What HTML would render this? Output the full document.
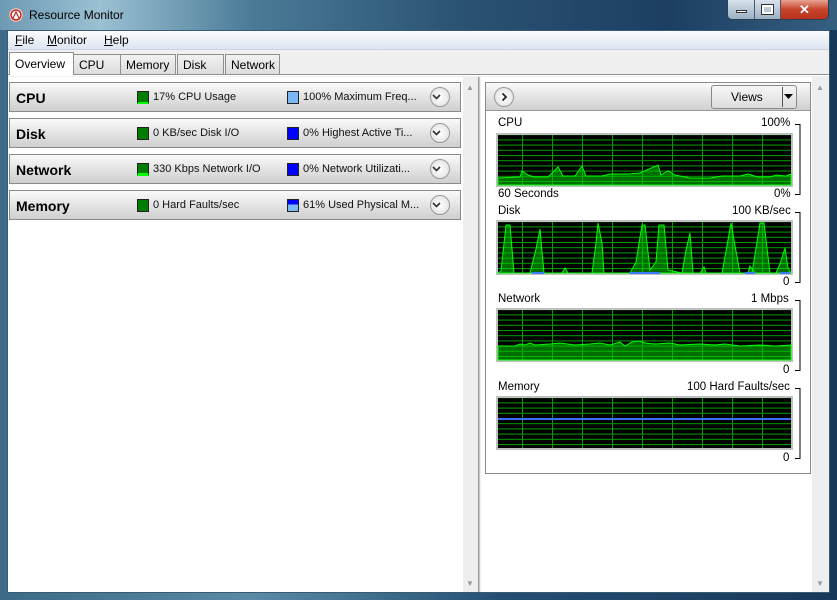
<!DOCTYPE html>
<html><head><meta charset="utf-8"><style>
*{margin:0;padding:0;box-sizing:border-box}
body{width:837px;height:600px;overflow:hidden;font-family:"Liberation Sans",sans-serif;font-size:12px;background:#fff;position:relative}
.abs{position:absolute}
#frame{left:0;top:0;width:837px;height:600px;background:linear-gradient(90deg,#3d6a86 0%,#5a8aa5 30%,#254f72 60%,#18385a 100%)}
#title{left:0;top:0;width:837px;height:30px;background:linear-gradient(90deg,#6d9ab4 0%,#9bc0d2 12%,#4b7b98 30%,#2a5273 55%,#1d3e63 80%,#355f80 100%)}
#client{left:7px;top:30px;width:823px;height:563px;background:#f0f0f0;border:1px solid #3a5a72}
#menu{left:8px;top:31px;width:821px;height:19px;background:linear-gradient(#fbfcfe,#dde5f1);border-bottom:1px solid #c8d2e0}
.mi{top:33px;font-size:12px;color:#000}
.tab{top:54px;height:20px;border:1px solid #8e8f8f;border-bottom:none;background:linear-gradient(#f2f2f2,#dcdcdc);font-size:12px;padding:3px 0 0 5px}
.panel{left:9px;width:452px;height:30px;border:1px solid #8a8a8a;background:linear-gradient(#fafafa 0%,#e6e6e6 45%,#cfcfcf 100%)}
.panel b{position:absolute;left:6px;top:7px;font-size:14px}
.panel .t{position:absolute;top:8px;font-size:11px;color:#111}
.sw{position:absolute;top:8px;width:12px;height:13px;border:1px solid #222}
.chev{position:absolute;left:420px;top:4px;width:20px;height:20px;border-radius:50%;border:1px solid #999;background:radial-gradient(#fff,#ddd)}
.glab{font-size:11.5px;color:#000}
</style></head><body>
<div id="frame" class="abs"></div>
<div id="title" class="abs"></div>
<svg class="abs" style="left:8px;top:7px" width="16" height="16"><circle cx="8" cy="8" r="7" fill="#fff" stroke="#999"/><circle cx="8" cy="8" r="5" fill="none" stroke="#c22" stroke-width="1.5"/><path d="M5 11L8 5L11 11" stroke="#c22" fill="none" stroke-width="1.2"/></svg>
<div class="abs" style="left:29px;top:8px;font-size:12px;color:#000">Resource Monitor</div>
<div class="abs" style="left:727px;top:0;width:102px;height:20px;border:1px solid #2b3f55;border-top:none;border-radius:0 0 5px 5px;overflow:hidden;display:flex">
<div style="width:27px;background:linear-gradient(#d8e2ec,#9bb0c4);border-right:1px solid #556"><div style="margin:10px 8px 0;width:11px;height:3px;background:#fff;border:1px solid #333"></div></div>
<div style="width:26px;background:linear-gradient(#d8e2ec,#9bb0c4);border-right:1px solid #556"><div style="margin:5px 7px 0;width:11px;height:9px;border:2px solid #fff;outline:1px solid #333"></div></div>
<div style="flex:1;background:linear-gradient(#e8a393,#c7432b 50%,#b8321c);color:#fff;font-weight:bold;text-align:center;font-size:13px;line-height:19px">✕</div></div>
<div id="client" class="abs"></div>
<div id="menu" class="abs"></div>
<div class="abs mi" style="left:15px"><u>F</u>ile</div>
<div class="abs mi" style="left:47px"><u>M</u>onitor</div>
<div class="abs mi" style="left:104px"><u>H</u>elp</div>
<div class="abs" style="left:8px;top:74px;width:821px;height:2px;background:#fff;border-top:1px solid #8e8f8f"></div>
<div class="abs tab" style="left:73px;width:48px">CPU</div>
<div class="abs tab" style="left:120px;width:56px">Memory</div>
<div class="abs tab" style="left:177px;width:47px">Disk</div>
<div class="abs tab" style="left:225px;width:55px">Network</div>
<div class="abs tab" style="left:9px;top:52px;height:23px;width:65px;background:#fff;padding-top:4px">Overview</div>
<div class="abs" style="left:8px;top:77px;width:470px;height:515px;background:#fff"></div>
<div class="abs" style="left:463px;top:77px;width:15px;height:515px;background:#eee"></div>
<div class="abs" style="left:466px;top:83px;color:#999;font-size:8px">▲</div>
<div class="abs" style="left:466px;top:579px;color:#999;font-size:8px">▼</div>
<div class="abs" style="left:478px;top:77px;width:2px;height:515px;background:#c8c8c8;border-left:1px solid #999"></div>

<div class="abs panel" style="top:82px"><b>CPU</b><div class="sw" style="left:127px;background:#0a0;background-image:radial-gradient(#000 0.6px,transparent 0.8px);background-size:2px 2px;border-bottom:2px solid #0f0"></div><div class="t" style="left:143px">17% CPU Usage</div><div class="sw" style="left:277px;background:#7bb8f4"></div><div class="t" style="left:293px">100% Maximum Freq...</div><div class="chev"></div></div>
<div class="abs panel" style="top:118px"><b>Disk</b><div class="sw" style="left:127px;background:#0a0;background-image:radial-gradient(#000 0.6px,transparent 0.8px);background-size:2px 2px"></div><div class="t" style="left:143px">0 KB/sec Disk I/O</div><div class="sw" style="left:277px;background:#00f"></div><div class="t" style="left:293px">0% Highest Active Ti...</div><div class="chev"></div></div>
<div class="abs panel" style="top:154px"><b>Network</b><div class="sw" style="left:127px;background:#0a0;background-image:radial-gradient(#000 0.6px,transparent 0.8px);background-size:2px 2px;border-bottom:3px solid #0f0"></div><div class="t" style="left:143px">330 Kbps Network I/O</div><div class="sw" style="left:277px;background:#00f"></div><div class="t" style="left:293px">0% Network Utilizati...</div><div class="chev"></div></div>
<div class="abs panel" style="top:190px"><b>Memory</b><div class="sw" style="left:127px;background:#0a0;background-image:radial-gradient(#000 0.6px,transparent 0.8px);background-size:2px 2px"></div><div class="t" style="left:143px">0 Hard Faults/sec</div><div class="sw" style="left:277px;background:linear-gradient(#00f 40%,#7bb8f4 40%)"></div><div class="t" style="left:293px">61% Used Physical M...</div><div class="chev"></div></div>
<svg class="abs" style="left:0;top:0" width="837" height="600">
<g fill="none" stroke="#333" stroke-width="1.6">
<path d="M433 95l3.5 3.5 3.5-3.5M433 131l3.5 3.5 3.5-3.5M433 167l3.5 3.5 3.5-3.5M433 203l3.5 3.5 3.5-3.5"/></g></svg>

<div class="abs" style="left:481px;top:77px;width:348px;height:515px;background:#fff"></div>
<div class="abs" style="left:812px;top:77px;width:17px;height:515px;background:#eee"></div>
<div class="abs" style="left:816px;top:83px;color:#999;font-size:8px">▲</div>
<div class="abs" style="left:816px;top:579px;color:#999;font-size:8px">▼</div>
<div class="abs" style="left:485px;top:82px;width:326px;height:392px;border:1px solid #8a8a8a;background:#fff"></div>
<div class="abs" style="left:486px;top:83px;width:324px;height:28px;background:linear-gradient(#fafafa,#e4e4e4 50%,#d0d0d0);border-bottom:1px solid #999"></div>
<div class="abs" style="left:494px;top:87px;width:20px;height:20px;border-radius:50%;border:1px solid #999;background:radial-gradient(#fff,#ddd)"></div>
<svg class="abs" style="left:494px;top:87px" width="20" height="20"><path d="M8.5 6.5l3.5 3.5-3.5 3.5" fill="none" stroke="#222" stroke-width="1.8"/></svg>
<div class="abs" style="left:711px;top:85px;width:86px;height:24px;border:1px solid #888;border-radius:3px;background:linear-gradient(#f6f6f6,#dcdcdc)"></div>
<div class="abs" style="left:731px;top:90px;font-size:12px">Views</div>
<div class="abs" style="left:782px;top:87px;width:1px;height:20px;background:#555"></div>
<svg class="abs" style="left:784px;top:93px" width="10" height="8"><path d="M0 1h9L4.5 6z" fill="#000"/></svg>

<div class="abs glab" style="left:498px;top:117px">CPU</div><div class="abs glab" style="left:761px;top:117px">100%</div>
<div class="abs glab" style="left:498px;top:188px">60 Seconds</div><div class="abs glab" style="left:774px;top:188px">0%</div>
<div class="abs glab" style="left:498px;top:205px">Disk</div><div class="abs glab" style="left:732px;top:205px">100 KB/sec</div>
<div class="abs glab" style="left:783px;top:276px">0</div>
<div class="abs glab" style="left:498px;top:293px">Network</div><div class="abs glab" style="left:751px;top:293px">1 Mbps</div>
<div class="abs glab" style="left:783px;top:364px">0</div>
<div class="abs glab" style="left:498px;top:381px">Memory</div><div class="abs glab" style="left:687px;top:381px">100 Hard Faults/sec</div>
<div class="abs glab" style="left:783px;top:452px">0</div>

<svg class="abs" style="left:0;top:0" width="837" height="600">
<defs><pattern id="g" x="492" y="129" width="30" height="5.2" patternUnits="userSpaceOnUse"><rect width="30" height="5.2" fill="#000"/><rect y="0" width="30" height="1" fill="#00a000"/><rect x="0" width="1" height="5.2" fill="#00a000"/></pattern>
<pattern id="g2" x="492" y="216" width="30" height="5.2" patternUnits="userSpaceOnUse"><rect width="30" height="5.2" fill="#000"/><rect width="30" height="1" fill="#00a000"/><rect width="1" height="5.2" fill="#00a000"/></pattern>
<pattern id="g3" x="492" y="304" width="30" height="5.2" patternUnits="userSpaceOnUse"><rect width="30" height="5.2" fill="#000"/><rect width="30" height="1" fill="#00a000"/><rect width="1" height="5.2" fill="#00a000"/></pattern>
<pattern id="g4" x="492" y="392" width="30" height="5.2" patternUnits="userSpaceOnUse"><rect width="30" height="5.2" fill="#000"/><rect width="30" height="1" fill="#00a000"/><rect width="1" height="5.2" fill="#00a000"/></pattern></defs>
<g stroke="#c0c0c0" stroke-width="2">
<rect x="497" y="134" width="295" height="52" fill="url(#g)"/>
<rect x="497" y="221" width="295" height="53" fill="url(#g2)"/>
<rect x="497" y="309" width="295" height="52" fill="url(#g3)"/>
<rect x="497" y="397" width="295" height="52" fill="url(#g4)"/>
</g>
<g fill="rgba(0,200,0,0.55)" stroke="#00ff00" stroke-width="1">
<polygon points="498,185 498,178 520,177 522,171 528,175 534,177 548,177 558,167 563,176 575,176 582,166 586,176 602,176 610,174 628,174 640,173 658,165 661,175 668,171 675,175 690,178 710,178 722,176 740,176 748,174 758,177 770,177 776,175 786,176 791,174 791,185"/>
<polygon points="498,273 501,271 506,225 510,225 514,273 530,273 536,249 540,229 544,273 562,273 565,268 568,273 592,273 596,243 598,223 602,243 604,273 630,273 636,262 642,225 645,225 650,270 656,262 659,225 664,225 668,270 682,273 686,250 690,233 693,273 700,273 704,267 706,273 722,273 728,240 731,223 734,240 740,273 748,273 750,266 755,273 757,273 752,273 758,236 760,223 764,223 770,273 776,273 780,264 785,248 788,268 791,273"/>
<polygon points="498,346 515,346 520,344 525,345 530,343 535,345 550,344 560,343 575,345 590,344 600,343 610,345 620,342 625,346 632,342 640,341 645,343 655,344 670,343 680,345 700,344 715,345 725,344 740,346 760,345 775,346 791,345 791,360 498,360"/>
</g>
<g fill="#3a7cff"><rect x="532" y="272" width="12" height="2"/><rect x="630" y="272" width="30" height="2"/><rect x="745" y="272" width="10" height="2"/><rect x="780" y="272" width="10" height="2"/></g>
<line x1="498" y1="419" x2="791" y2="419" stroke="#3a6cff" stroke-width="2"/>
<g fill="none" stroke="#000" stroke-width="1">
<path d="M795 124.5h5v70h-5M795 212.5h5v70h-5M795 300.5h5v70h-5M795 388.5h5v70h-5"/></g>
</svg>
</body></html>
